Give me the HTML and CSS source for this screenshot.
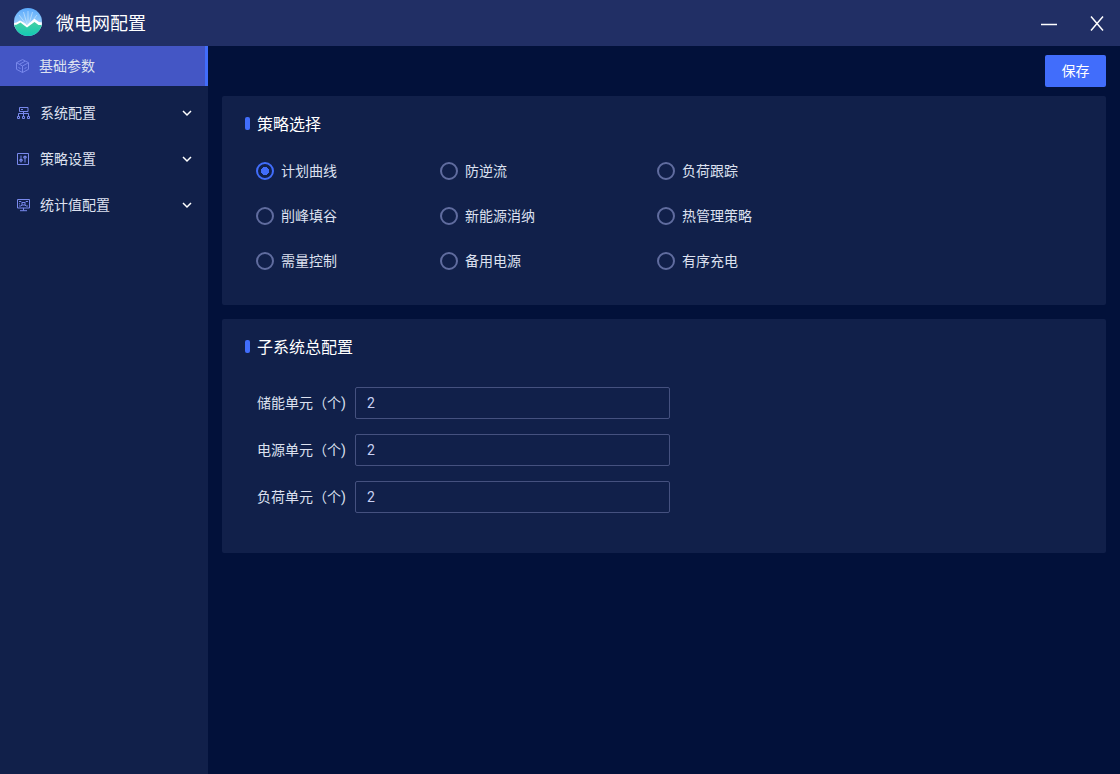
FILE: index.html
```html
<!DOCTYPE html>
<html lang="zh-CN">
<head>
<meta charset="utf-8">
<title>微电网配置</title>
<link rel="stylesheet" href="styles.css">
</head>
<body>
<div class="app">
  <header class="titlebar">
    <svg class="logo" viewBox="0 0 28 28" aria-hidden="true">
      <defs>
        <linearGradient id="sky" x1="0" y1="0" x2="0" y2="1"><stop offset="0" stop-color="#5aa9fb"/><stop offset=".6" stop-color="#9bd0fb"/></linearGradient>
        <linearGradient id="hill" x1="0" y1="0" x2="0" y2="1"><stop offset="0" stop-color="#46cfa2"/><stop offset="1" stop-color="#12c9b4"/></linearGradient>
        <clipPath id="disc"><circle cx="14" cy="14" r="14"/></clipPath>
      </defs>
      <g clip-path="url(#disc)">
        <path fill="url(#sky)" d="M0 0h28v28H0z"/>
        <path d="M14 17V3M13 16 9.500 4M15 16l3.500-12M12 16 5 7M16 16l7-9" stroke="#e2f3ff" stroke-width=".7" opacity=".75"/>
        <path fill="#fff" d="M0 15 2.500 14.500 6 12.500 9 14 13 17 20.500 10.800 25 14 28 14.500v6H0z"/>
        <path fill="url(#hill)" d="M0 17 2.500 16.800 6.500 14.500 9 16.500 13 19.500 17 16.500 20.500 14 24.500 17 28 17v11H0z"/>
      </g>
    </svg>
    <h1 class="title">微电网配置</h1>
    <button class="window-button" type="button" aria-label="最小化">
      <svg width="16" height="16" viewBox="0 0 16 16"><path d="M0 9.500h16" stroke="#fff" stroke-width="1.500"/></svg>
    </button>
    <button class="window-button" type="button" aria-label="关闭">
      <svg width="16" height="16" viewBox="0 0 16 16"><path d="M2 1.500 14 15.500M14 1.500 2 15.500" stroke="#fff" stroke-width="1.500"/></svg>
    </button>
  </header>

  <div class="body">
    <nav class="sidebar">
      <a class="nav-item nav-item-active" href="#basic">
        <svg class="nav-icon" viewBox="0 0 14 14"><path d="M7.500 .6 13.500 3.700v6.600L7.500 13.500l-6-3.200V3.700zM1.500 3.700l6 3.300 6-3.300M7.500 7v6.500M4.500 5.300l5.500-3M3.500 8.500 5.500 9.600M11.500 8.500 9.500 9.600"/></svg>
        <span>基础参数</span>
      </a>
      <a class="nav-item" href="#system">
        <svg class="nav-icon" viewBox="0 0 14 14"><path d="M3.500 1.500h8.500v4H3.500zM5 3.500h2M7.500 5.500v4.500M2.500 10V7.500h10V10M1.500 10.500h2v2h-2zM6.500 10.500h2v2h-2zM11.500 10.500h2v2h-2z"/></svg>
        <span>系统配置</span>
        <svg class="chevron" viewBox="0 0 10 10"><path d="m1 3 4 4 4-4"/></svg>
      </a>
      <a class="nav-item" href="#strategy">
        <svg class="nav-icon" viewBox="0 0 14 14"><path d="M1.500 1.500h11v11h-11zM5 3.500v7M9 3.500v7M3.800 7.500h2.400v1.500H3.800zM7.800 4.500h2.400V6H7.800z"/></svg>
        <span>策略设置</span>
        <svg class="chevron" viewBox="0 0 10 10"><path d="m1 3 4 4 4-4"/></svg>
      </a>
      <a class="nav-item" href="#statistics">
        <svg class="nav-icon" viewBox="0 0 14 14"><path d="M1.500 1.500h12v8.500h-12zM7.500 10v2.500M4 12.700h7M3 3.500h2l1 1M12 3.500h-2l-1 1M3 8h2l1-1M12 8h-2L9 7M3 5.800h1M6 4.500h3V7H6z"/></svg>
        <span>统计值配置</span>
        <svg class="chevron" viewBox="0 0 10 10"><path d="m1 3 4 4 4-4"/></svg>
      </a>
    </nav>

    <main class="content">
      <div class="toolbar"><button class="save" type="button">保存</button></div>

      <section class="panel panel-strategy">
        <h2 class="panel-title">策略选择</h2>
        <div class="radios">
          <label class="radio"><input type="radio" name="strategy" checked>计划曲线</label>
          <label class="radio"><input type="radio" name="strategy">防逆流</label>
          <label class="radio"><input type="radio" name="strategy">负荷跟踪</label>
          <label class="radio"><input type="radio" name="strategy">削峰填谷</label>
          <label class="radio"><input type="radio" name="strategy">新能源消纳</label>
          <label class="radio"><input type="radio" name="strategy">热管理策略</label>
          <label class="radio"><input type="radio" name="strategy">需量控制</label>
          <label class="radio"><input type="radio" name="strategy">备用电源</label>
          <label class="radio"><input type="radio" name="strategy">有序充电</label>
        </div>
      </section>

      <section class="panel panel-subsystem">
        <h2 class="panel-title">子系统总配置</h2>
        <div class="fields">
          <label class="field-label" for="storage">储能单元（个)</label>
          <input class="field-input" id="storage" type="text" value="2">
          <label class="field-label" for="power">电源单元（个)</label>
          <input class="field-input" id="power" type="text" value="2">
          <label class="field-label" for="load">负荷单元（个)</label>
          <input class="field-input" id="load" type="text" value="2">
        </div>
      </section>
    </main>
  </div>
</div>
</body>
</html>
```

FILE: styles.css
```css
* {
  box-sizing: border-box;
}

body {
  margin: 0;
  background: #02113a;
  color: #dde1f0;
  font: 14px/20px Roboto, "Noto Sans CJK SC", sans-serif;
}

button,
input {
  font: inherit;
}

.app {
  display: flex;
  flex-direction: column;
  min-height: 100vh;
}

.titlebar {
  display: flex;
  align-items: center;
  height: 46px;
  padding: 0 7px 0 14px;
  background: #212f65;
}

.logo {
  width: 28px;
  height: 28px;
  margin-bottom: 2px;
}

.title {
  flex: 1;
  margin: 0 0 0 14px;
  color: #fff;
  font-size: 18px;
  font-weight: 400;
  line-height: 28px;
  padding-top: 2px;
}

.window-button {
  display: flex;
  align-items: center;
  justify-content: center;
  width: 32px;
  height: 32px;
  margin-left: 16px;
  padding: 0;
  border: 0;
  background: none;
}

.body {
  display: flex;
  flex: 1;
}

.sidebar {
  flex: none;
  width: 208px;
  background: #11204a;
}

.nav-item {
  display: flex;
  align-items: center;
  height: 46px;
  padding: 0 16px;
  color: inherit;
  text-decoration: none;
}

.nav-item-active {
  height: 40px;
  margin-bottom: 4px;
  padding-left: 15px;
  border-right: 3px solid #416dfb;
  background: #4456c5;
}

.nav-icon {
  width: 14px;
  height: 14px;
  margin-right: 10px;
  fill: none;
  stroke: #7888ec;
  stroke-width: 1;
}

.chevron {
  width: 10px;
  height: 10px;
  margin-left: auto;
  fill: none;
  stroke: #fff;
  stroke-width: 1.5;
}

.content {
  flex: 1;
  padding: 9px 14px;
}

.toolbar {
  display: flex;
  justify-content: flex-end;
  margin-bottom: 9px;
}

.save {
  min-width: 61px;
  height: 32px;
  padding: 0 16px;
  border: 0;
  border-radius: 2px;
  background: #416dfb;
  color: #fff;
}

.panel {
  padding: 16px 23px;
  border-radius: 2px;
  background: #11204a;
}

.panel-strategy {
  margin-bottom: 14px;
  padding-bottom: 34px;
}

.panel-subsystem {
  padding-bottom: 40px;
}

.panel-title {
  display: flex;
  align-items: center;
  gap: 7px;
  margin: 0;
  color: #fff;
  font-size: 16px;
  font-weight: 400;
  line-height: 25px;
}

.panel-title::before {
  width: 5px;
  height: 13px;
  margin-bottom: 2px;
  border-radius: 2px;
  background: #416dfb;
  content: "";
}

.radios {
  display: grid;
  grid-template-columns: 184px 217px auto;
  row-gap: 25px;
  margin: 24px 0 0 11px;
}

.radio {
  display: flex;
  align-items: center;
  gap: 7px;
}

.radio input {
  width: 18px;
  height: 18px;
  margin: 0;
  border: 2px solid #606c9f;
  border-radius: 50%;
  appearance: none;
}

.radio input:checked {
  border-color: #416dfb;
  background: radial-gradient(circle, #416dfb 4px, transparent 4px);
}

.fields {
  display: grid;
  grid-template-columns: auto 315px;
  justify-content: start;
  align-items: center;
  gap: 15px 9px;
  margin: 27px 0 0 12px;
}

.field-input {
  width: 100%;
  height: 32px;
  padding: 0 11px;
  border: 1px solid #45517f;
  border-radius: 2px;
  background: transparent;
  color: #c9d1f3;
}
```
